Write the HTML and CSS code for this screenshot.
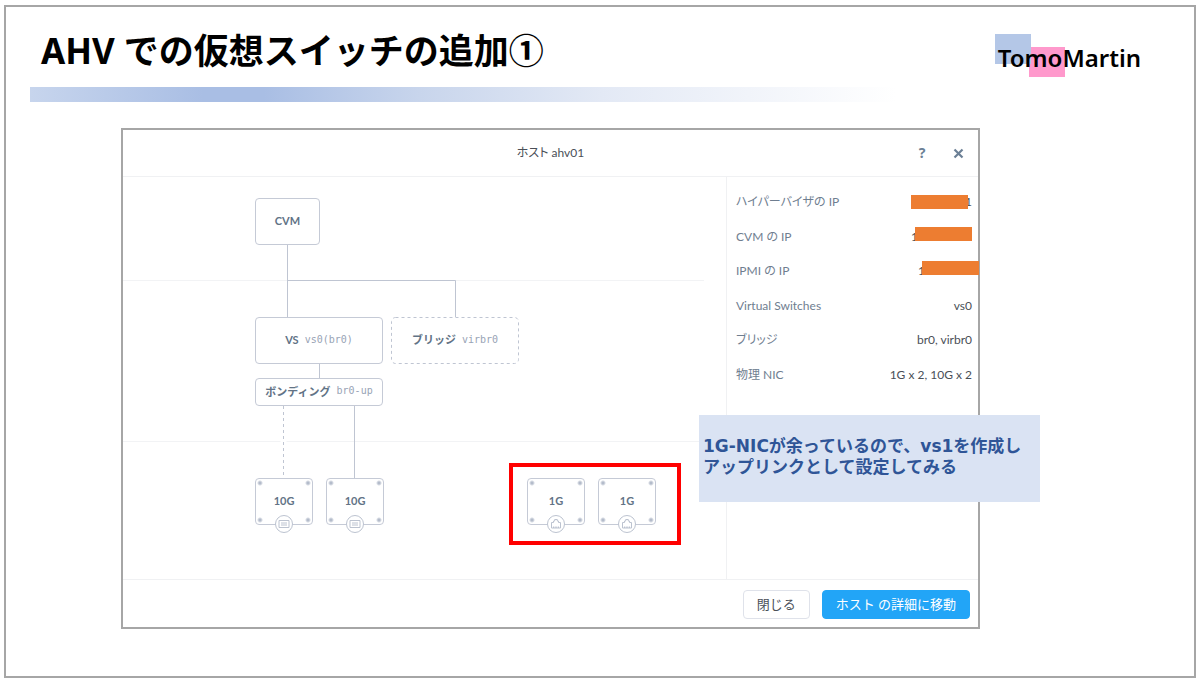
FILE: index.html
```html
<!DOCTYPE html>
<html lang="ja">
<head>
<meta charset="utf-8">
<title>AHV での仮想スイッチの追加①</title>
<link rel="stylesheet" href="styles.css">
</head>
<body>
<main class="slide">
  <header class="slide-head">
    <h1 class="title">AHV での仮想スイッチの追加①</h1>
    <div class="brand">TomoMartin</div>
  </header>
  <div class="rule"></div>

  <div class="stage">
    <section class="dialog" aria-labelledby="dialog-title">
      <header class="dialog-head">
        <h2 class="dialog-title" id="dialog-title">ホスト ahv01</h2>
        <div class="dialog-tools">
          <button class="tool" type="button" aria-label="ヘルプ">?</button>
          <button class="tool" type="button" aria-label="閉じる">
            <svg width="11" height="11" viewBox="0 0 11 11"><path d="M1.5 1.5l8 8M9.5 1.5l-8 8" stroke="currentColor" stroke-width="2.2"/></svg>
          </button>
        </div>
      </header>

      <div class="dialog-body">
        <div class="canvas">
          <svg class="wires" width="604" height="402" viewBox="0 0 604 402" fill="none">
            <path class="lane" d="M0 103.5H581M0 264.5H604"/>
            <path class="wire" d="M164.5 67V141M164.5 103.5H332.5V140M196.5 187V201M231.5 229V301"/>
            <path class="gap" d="M160.5 262V267"/>
            <path class="wire dashed" d="M160.5 229V301"/>
          </svg>
          <div class="node cvm"><b>CVM</b></div>
          <div class="node vs"><b>VS</b><code>vs0(br0)</code></div>
          <div class="node bridge">
            <svg class="outline" width="128" height="47" viewBox="0 0 128 47"><rect x="0.5" y="0.5" width="127" height="46" rx="4" fill="none"/></svg>
            <b>ブリッジ</b><code>virbr0</code>
          </div>
          <div class="node bond"><b>ボンディング</b><code>br0-up</code></div>

          <div class="node nic nic-a"><b>10G</b>
            <svg class="port" width="20" height="20" viewBox="0 0 20 20"><circle cx="10" cy="10" r="8.5"/><path d="M5 6.5h10v7H5zM7 9h6M7 11h6"/></svg>
          </div>
          <div class="node nic nic-b"><b>10G</b>
            <svg class="port" width="20" height="20" viewBox="0 0 20 20"><circle cx="10" cy="10" r="8.5"/><path d="M5 6.5h10v7H5zM7 9h6M7 11h6"/></svg>
          </div>
          <div class="highlight"></div>
          <div class="node nic nic-c"><b>1G</b>
            <svg class="port" width="20" height="20" viewBox="0 0 20 20"><circle cx="10" cy="10" r="8.5"/><path d="M5.5 14V8.5h2V7h1.2V5.5h2.6V7h1.2v1.5h2V14zM7.5 14v-1.5M9.2 14v-1.5M10.8 14v-1.5M12.5 14v-1.5"/></svg>
          </div>
          <div class="node nic nic-d"><b>1G</b>
            <svg class="port" width="20" height="20" viewBox="0 0 20 20"><circle cx="10" cy="10" r="8.5"/><path d="M5.5 14V8.5h2V7h1.2V5.5h2.6V7h1.2v1.5h2V14zM7.5 14v-1.5M9.2 14v-1.5M10.8 14v-1.5M12.5 14v-1.5"/></svg>
          </div>
        </div>

        <dl class="facts">
          <div class="fact"><dt>ハイパーバイザの IP</dt><dd>1<i class="mask mask-a"></i></dd></div>
          <div class="fact"><dt>CVM の IP</dt><dd class="pad-b">1<i class="mask mask-b"></i></dd></div>
          <div class="fact"><dt>IPMI の IP</dt><dd class="pad-c">1<i class="mask mask-c"></i></dd></div>
          <div class="fact"><dt>Virtual Switches</dt><dd>vs0</dd></div>
          <div class="fact"><dt>ブリッジ</dt><dd>br0, virbr0</dd></div>
          <div class="fact"><dt>物理 NIC</dt><dd>1G x 2, 10G x 2</dd></div>
        </dl>
      </div>

      <footer class="dialog-foot">
        <button class="btn" type="button">閉じる</button>
        <button class="btn primary" type="button">ホスト の詳細に移動</button>
      </footer>
    </section>
    <p class="callout">1G-NICが余っているので、vs1を作成し<br>アップリンクとして設定してみる</p>
  </div>
</main>
</body>
</html>
```
FILE: styles.css
```css
* { box-sizing: border-box; }

body {
  margin: 0;
  padding: 5px 4px 3px;
  min-height: 100vh;
  display: flex;
  background: #fff;
  color: #000;
  font-family: Lato, "Noto Sans CJK JP", sans-serif;
}

.slide {
  flex: 1;
  border: 2px solid #a6a6a6;
  padding: 0 24px;
}

.slide-head {
  display: flex;
  justify-content: space-between;
  align-items: flex-start;
  height: 80px;
  padding: 16px 27px 0 11px;
}

.title {
  margin: 0;
  font: bold 35px/56px "Noto Sans", "Noto Sans CJK JP", sans-serif;
  white-space: nowrap;
}

.brand {
  margin-top: 11px;
  padding: 0 2px 0 3px;
  height: 43px;
  font: 600 24px/48px "Noto Sans", sans-serif;
  background:
    linear-gradient(#b4c7e7, #b4c7e7) 0 0 / 36px 30px no-repeat,
    linear-gradient(#ff99cc, #ff99cc) 34px 13px / 36px 30px no-repeat;
}

.rule {
  height: 15px;
  width: 76%;
  background: linear-gradient(90deg, #c7d5ed 0, #a9bee4 20%, #a9bee4 27%, #c8d5ec 45%, #e3e9f5 66%, #fff 100%);
}

.stage {
  position: relative;
  margin: 26px 190px 0 91px;
}

.dialog {
  border: 2px solid #a6a6a6;
  background: #fff;
}

.dialog-head {
  position: relative;
  display: flex;
  align-items: center;
  justify-content: center;
  height: 47px;
  border-bottom: 1px solid #f0f1f3;
}

.dialog-title {
  margin: 0;
  font-size: 12px;
  font-weight: 400;
  line-height: 20px;
  color: #4a4f57;
  font-feature-settings: "palt";
}

.dialog-tools {
  position: absolute;
  right: 12px;
  display: flex;
  gap: 20px;
}

.tool {
  display: flex;
  align-items: center;
  justify-content: center;
  width: 16px;
  height: 20px;
  padding: 0;
  border: 0;
  background: none;
  color: #6b7f95;
  font: bold 14px/20px "Noto Sans", sans-serif;
}

.dialog-body {
  display: flex;
  height: 402px;
}

.canvas {
  position: relative;
  flex: 1;
}

.wires { position: absolute; left: 0; top: 0; }
.lane { stroke: #f2f3f5; }
.wire { stroke: #bfc5d2; }
.dashed { stroke-dasharray: 3 3; }
.gap { stroke: #fff; stroke-width: 6; }

.node {
  position: absolute;
  display: flex;
  align-items: center;
  justify-content: center;
  gap: 6px;
  height: 47px;
  padding-bottom: 3px;
  border: 1px solid #c5cad6;
  border-radius: 4px;
  background: #fff;
  color: #627386;
  font-size: 11px;
  white-space: nowrap;
}

.node code {
  color: #98a3b5;
  font: 10px "DejaVu Sans Mono", monospace;
}

.cvm { left: 132px; top: 21px; width: 65px; }
.vs { left: 132px; top: 140px; width: 128px; }
.bridge { left: 268px; top: 140px; width: 128px; border: 0; }
.bond { left: 132px; top: 201px; width: 128px; height: 28px; }

.outline {
  position: absolute;
  left: 0;
  top: 0;
  stroke: #bfc5d2;
  stroke-dasharray: 3 3;
}

.nic {
  top: 301px;
  width: 58px;
  background:
    radial-gradient(circle, #b4bccb 1px, transparent 3px) -6px -6px / 20px 20px no-repeat,
    radial-gradient(circle, #b4bccb 1px, transparent 3px) 42px -6px / 20px 20px no-repeat,
    radial-gradient(circle, #b4bccb 1px, transparent 3px) -6px 31px / 20px 20px no-repeat,
    radial-gradient(circle, #b4bccb 1px, transparent 3px) 42px 31px / 20px 20px no-repeat,
    #fff;
}

.nic-a { left: 132px; }
.nic-b { left: 203px; }
.nic-c { left: 404px; }
.nic-d { left: 475px; }

.port {
  position: absolute;
  left: 18px;
  bottom: -10px;
  fill: #fff;
  stroke: #bcc3d0;
}

.highlight {
  position: absolute;
  left: 386px;
  top: 286px;
  width: 172px;
  height: 82px;
  border: 4px solid #f00;
}

.facts {
  display: flex;
  flex-direction: column;
  flex: 0 0 252px;
  margin: 0;
  padding: 8px 6px 187px 9px;
  border-left: 1px solid #f0f1f3;
  line-height: 20px;
}

.fact {
  flex: 1;
  display: flex;
  align-items: center;
  justify-content: space-between;
}

.fact dt {
  color: #6f7e90;
  font-size: 12px;
  font-feature-settings: "palt";
}

.fact dd {
  position: relative;
  margin: 0;
  font-size: 12px;
  color: #4a4f57;
}

.pad-b { padding-right: 54px; }
.pad-c { padding-right: 47px; }

.mask {
  position: absolute;
  top: 3px;
  height: 14px;
  width: 57px;
  background: #ed7d31;
}

.mask-a { right: 4px; }
.mask-b { right: 0; top: 0; }
.mask-c { right: -7px; top: 0; }

.dialog-foot {
  display: flex;
  align-items: center;
  justify-content: flex-end;
  gap: 12px;
  height: 48px;
  padding: 1px 8px 0;
  border-top: 1px solid #f0f1f3;
}

.btn {
  height: 29px;
  padding: 0 13px;
  border: 1px solid #dfe2ea;
  border-radius: 4px;
  background: #fff;
  color: #4a4f57;
  font: 13px/20px Lato, "Noto Sans CJK JP", sans-serif;
}

.primary {
  border-color: #22a5f7;
  background: #22a5f7;
  color: #fff;
}

.callout {
  position: absolute;
  left: 578px;
  top: 287px;
  width: 341px;
  height: 87px;
  margin: 0;
  padding: 21px 4px;
  background: #dae3f3;
  color: #2f5597;
  font: bold 17px/21px "DejaVu Sans", "Noto Sans CJK JP", sans-serif;
  white-space: nowrap;
}
```
